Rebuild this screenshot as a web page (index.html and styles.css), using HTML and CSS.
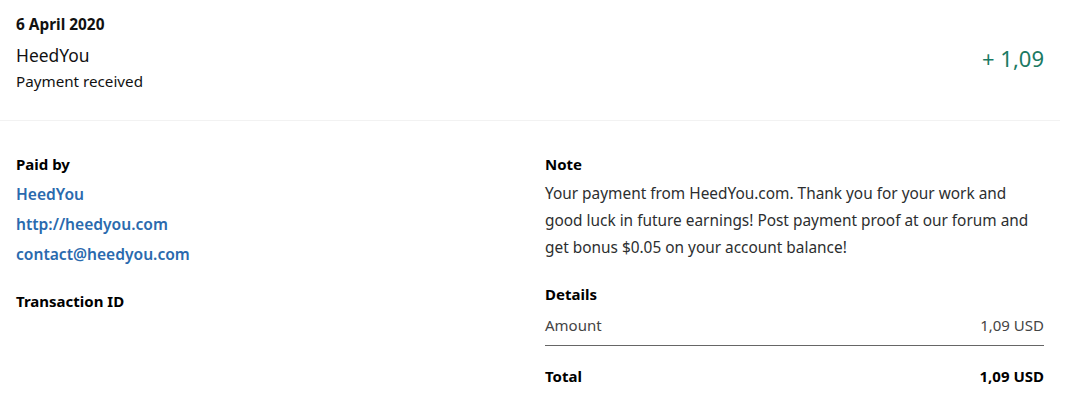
FILE: index.html
```html
<!DOCTYPE html>
<html lang="en">
<head>
<meta charset="utf-8">
<title>Transaction details</title>
<link rel="stylesheet" href="styles.css">
</head>
<body>
<div class="page">
  <header class="summary">
    <div class="summary-info">
      <div class="date">6 April 2020</div>
      <div class="name">HeedYou</div>
      <div class="status">Payment received</div>
    </div>
    <div class="gross">+ 1,09</div>
  </header>
  <section class="details">
    <div class="col">
      <h3 class="label">Paid by</h3>
      <div class="links">
        <a class="link" href="#">HeedYou</a>
        <a class="link" href="#">http://heedyou.com</a>
        <a class="link" href="#">contact@heedyou.com</a>
      </div>
      <h3 class="label txn">Transaction ID</h3>
    </div>
    <div class="col">
      <h3 class="label">Note</h3>
      <p class="note">Your payment from HeedYou.com. Thank you for your work and good luck in future earnings! Post payment proof at our forum and get bonus $0.05 on your account balance!</p>
      <h3 class="label details-label">Details</h3>
      <div class="row amount-row">
        <span>Amount</span>
        <span>1,09 USD</span>
      </div>
      <div class="row total-row">
        <span>Total</span>
        <span>1,09 USD</span>
      </div>
    </div>
  </section>
</div>
</body>
</html>
```

FILE: styles.css
```css
* { box-sizing: border-box; }
html, body { margin: 0; padding: 0; background: #fff; }
body {
  font-family: "Noto Sans", "Open Sans", sans-serif;
  color: #2c2e2f;
  font-size: 15px;
}
.page { width: 1060px; }
.summary {
  display: flex;
  justify-content: space-between;
  align-items: flex-start;
  padding: 15px 16px 29px 16px;
  border-bottom: 1px solid #f2f2f2;
}
.date {
  font-weight: 700;
  font-size: 15.4px;
  line-height: 20px;
  color: #111;
}
.name {
  margin-top: 8px;
  font-size: 17.4px;
  line-height: 24px;
  color: #111;
}
.status {
  margin-top: 4px;
  font-size: 15.2px;
  line-height: 20px;
  color: #111;
}
.gross {
  margin-top: 29px;
  font-size: 22px;
  line-height: 28px;
  color: #1b7a63;
}
.details {
  display: grid;
  grid-template-columns: 529px 499px;
  padding: 33px 16px 0 16px;
}
.label {
  margin: 0;
  font-size: 15px;
  line-height: 20px;
  font-weight: 700;
  color: #000;
}
.links {
  display: flex;
  flex-direction: column;
  margin-top: 5px;
}
.link {
  display: block;
  line-height: 30px;
  font-size: 15.6px;
  font-weight: 600;
  color: #2a6aae;
  text-decoration: none;
}
.txn { margin-top: 22px; }
.note {
  margin: 6px 0 0 0;
  line-height: 27px;
  font-size: 15.4px;
  color: #2c2e2f;
}
.details-label { margin-top: 23px; }
.row {
  display: flex;
  justify-content: space-between;
  line-height: 20px;
  font-size: 15px;
}
.amount-row {
  margin-top: 11px;
  padding-bottom: 10px;
  border-bottom: 1px solid #666;
  color: #444;
}
.total-row {
  margin-top: 20px;
  font-weight: 700;
  color: #000;
}
```
